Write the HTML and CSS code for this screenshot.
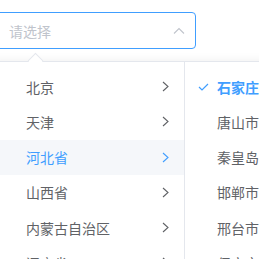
FILE: index.html
```html
<!DOCTYPE html>
<html lang="zh-CN">
<head>
  <meta charset="UTF-8">
  <title>Cascader</title>
  <link rel="stylesheet" href="styles.css">
</head>
<body>
  <div class="page">
    <!-- Input -->
    <div class="cascader-input">
      <span class="placeholder">请选择</span>
      <svg class="caret" width="12" height="8" viewBox="0 0 12 8"><polyline points="1,6.5 6,1.5 11,6.5" fill="none" stroke="#c0c4cc" stroke-width="1.1"/></svg>
    </div>

    <!-- Dropdown panel -->
    <div class="panel">
      <span class="popper-arrow"></span>
      <ul class="menu menu-first">
        <li class="node"><span>北京</span><svg class="next" width="7" height="11" viewBox="0 0 7 11"><polyline points="1,1 6,5.5 1,10" fill="none" stroke="currentColor" stroke-width="1.1"/></svg></li>
        <li class="node"><span>天津</span><svg class="next" width="7" height="11" viewBox="0 0 7 11"><polyline points="1,1 6,5.5 1,10" fill="none" stroke="currentColor" stroke-width="1.1"/></svg></li>
        <li class="node active hover"><span>河北省</span><svg class="next" width="7" height="11" viewBox="0 0 7 11"><polyline points="1,1 6,5.5 1,10" fill="none" stroke="currentColor" stroke-width="1.1"/></svg></li>
        <li class="node"><span>山西省</span><svg class="next" width="7" height="11" viewBox="0 0 7 11"><polyline points="1,1 6,5.5 1,10" fill="none" stroke="currentColor" stroke-width="1.1"/></svg></li>
        <li class="node"><span>内蒙古自治区</span><svg class="next" width="7" height="11" viewBox="0 0 7 11"><polyline points="1,1 6,5.5 1,10" fill="none" stroke="currentColor" stroke-width="1.1"/></svg></li>
        <li class="node"><span>辽宁省</span><svg class="next" width="7" height="11" viewBox="0 0 7 11"><polyline points="1,1 6,5.5 1,10" fill="none" stroke="currentColor" stroke-width="1.1"/></svg></li>
      </ul>
      <ul class="menu menu-second">
        <li class="node active"><svg class="check" width="11" height="8" viewBox="0 0 11 8"><polyline points="1,4 4,7 10,1" fill="none" stroke="currentColor" stroke-width="1.2"/></svg><span>石家庄市</span></li>
        <li class="node"><span>唐山市</span></li>
        <li class="node"><span>秦皇岛市</span></li>
        <li class="node"><span>邯郸市</span></li>
        <li class="node"><span>邢台市</span></li>
        <li class="node"><span>保定市</span></li>
      </ul>
    </div>
  </div>
</body>
</html>
```

FILE: styles.css
```css
/* Page */
body {
  margin: 0;
  background: #fff;
  font-family: "Noto Sans CJK SC", "Noto Sans", sans-serif;
  font-size: 14px;
  color: #606266;
  overflow: hidden;
}

.page {
  margin: 12px 0 0 -10px;
  width: 420px;
}

/* Input */
.cascader-input {
  box-sizing: border-box;
  margin-left: 4px;
  width: 202px;
  height: 37px;
  border: 1px solid #409eff;
  border-radius: 4px;
  display: flex;
  align-items: center;
  justify-content: space-between;
  padding: 0 10px 0 14px;
}

.placeholder {
  color: #c0c4cc;
  line-height: 1;
}

.caret {
  display: block;
}

/* Panel */
.panel {
  position: relative;
  margin-top: 12px;
  display: flex;
  background: #fff;
  border: 1px solid #e4e7ed;
  border-radius: 4px;
  box-shadow: 0 2px 12px rgba(0, 0, 0, 0.1);
}

.popper-arrow {
  position: absolute;
  top: -7px;
  left: 39px;
  width: 10px;
  height: 10px;
  background: #fff;
  border-top: 1px solid #e4e7ed;
  border-left: 1px solid #e4e7ed;
  transform: rotate(45deg);
}

.menu {
  list-style: none;
  margin: 0;
  padding: 7px 0;
}

.menu-first {
  width: 193px;
  border-right: 1px solid #e4e7ed;
}

.menu-second {
  flex: 1;
}

.node {
  height: 35.25px;
  display: flex;
  align-items: center;
  justify-content: space-between;
  padding: 0 15px 0 35px;
}

.node.hover {
  background: #f5f7fa;
}

.node.active {
  color: #409eff;
}

.menu-second .node {
  justify-content: flex-start;
  padding-left: 32px;
}

.menu-second .node.active {
  font-weight: bold;
  padding-left: 13px;
}

.check {
  margin-right: 8px;
}

.next {
  color: #606266;
}

.active .next {
  color: #409eff;
}
```
